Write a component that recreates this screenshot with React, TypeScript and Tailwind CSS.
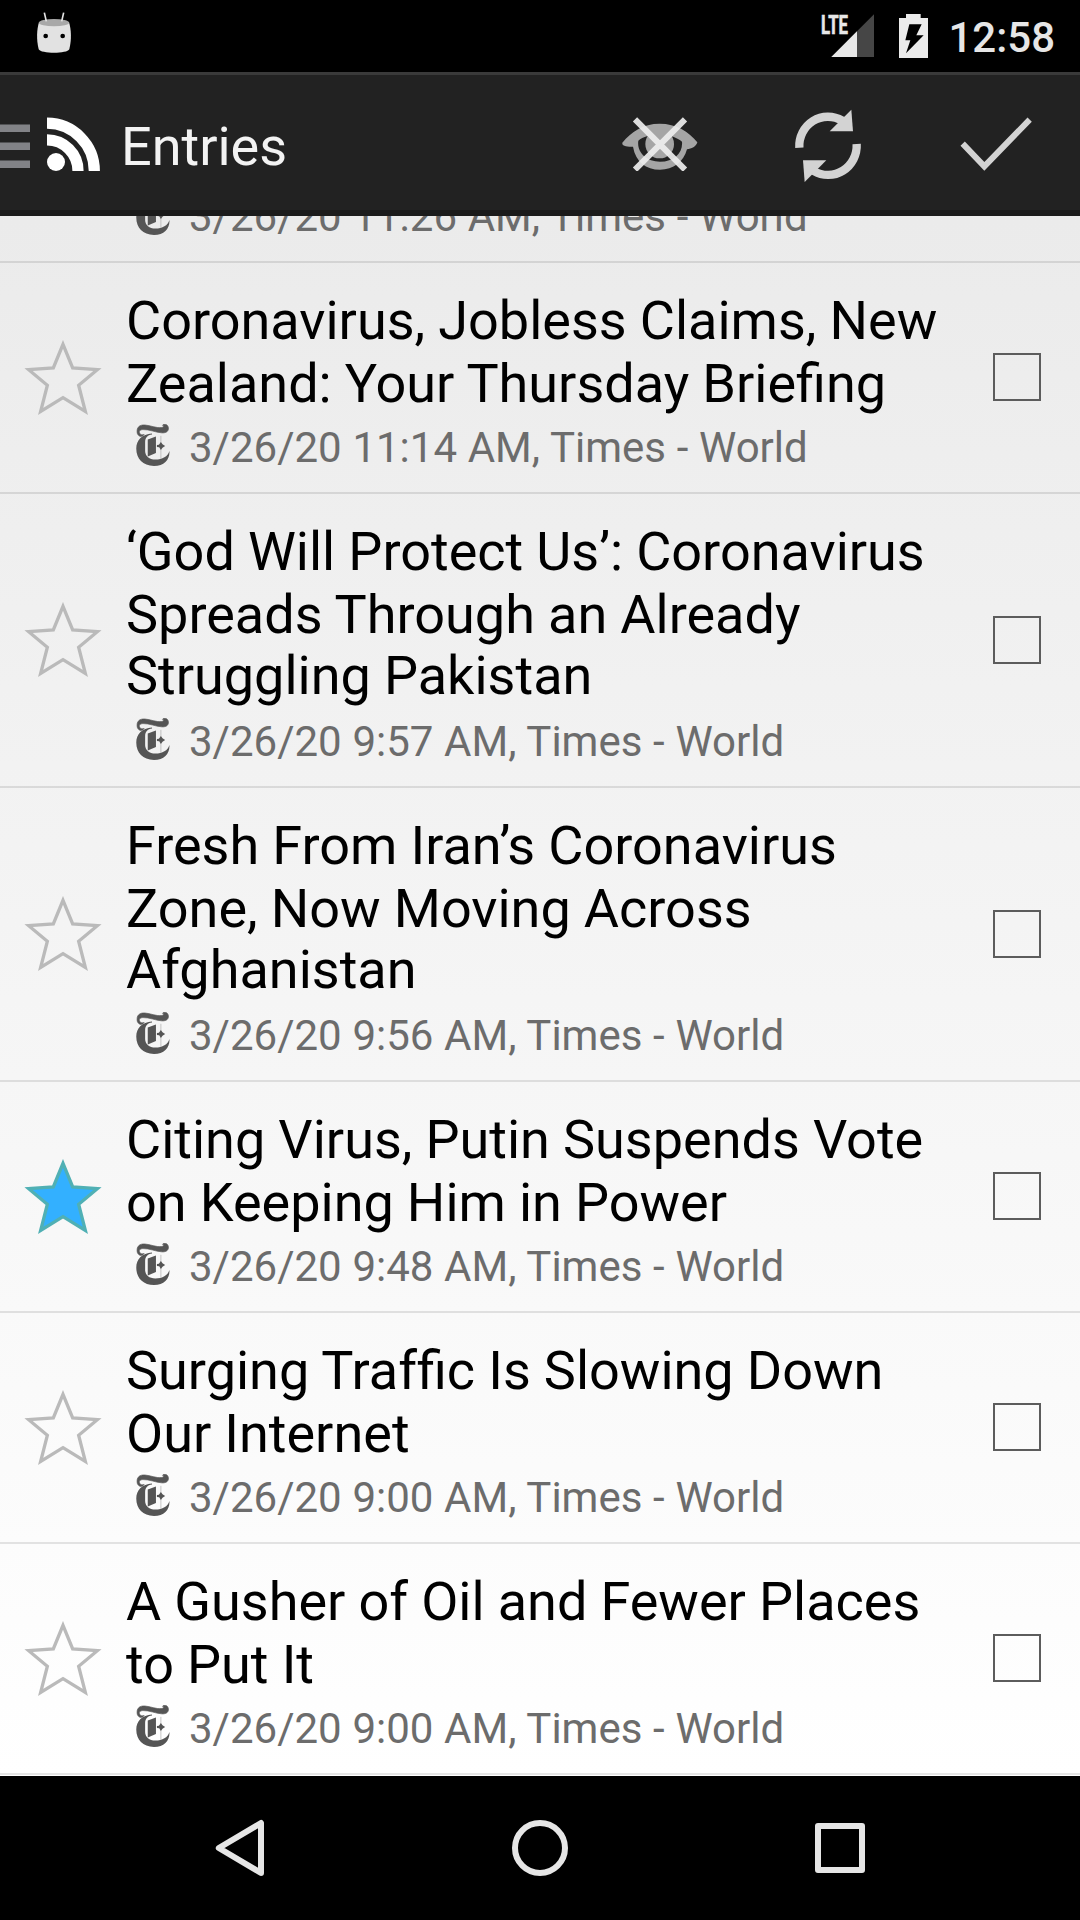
import React from "react";

type Entry = { lines: string[][]; meta: string; starred?: boolean };

const entries: Entry[] = [
  { lines: [["Coronavirus, Jobless Claims, New"], ["Zealand: Your Thursday Briefing"]], meta: "3/26/20 11:14 AM, Times - World" },
  { lines: [["‘God Will Protect Us’: Coronavirus"], ["Spreads Through an Already"], ["Struggling Pakistan"]], meta: "3/26/20 9:57 AM, Times - World" },
  { lines: [["Fresh From Iran’s Coronavirus"], ["Zone, Now Moving Across"], ["Afghanistan"]], meta: "3/26/20 9:56 AM, Times - World" },
  { lines: [["Citing Virus, Putin Suspends Vote"], ["on Keeping Him in Power"]], meta: "3/26/20 9:48 AM, Times - World", starred: true },
  // Split inside "Traffic" so that only the "fi" pair forms a ligature.
  { lines: [["Surging Traf", "fic Is Slowing Down"], ["Our Internet"]], meta: "3/26/20 9:00 AM, Times - World" },
  { lines: [["A Gusher of Oil and Fewer Places"], ["to Put It"]], meta: "3/26/20 9:00 AM, Times - World" },
];

function TimesLogo() {
  return (
    <svg className="mt-px ml-[10px] h-[42px] w-[34px] shrink-0" viewBox="34 26 102 128" fill="#555">
      <path d="M37 54C34 36 44 28 60 29C76 30 96 39 110 37C118 36 119 31 114 30C117 25 128 26 131 34C135 46 127 54 112 53C94 52 72 42 54 43C44 44 41 49 45 55C47 59 52 60 58 58C51 68 40 64 37 54Z" stroke="#555" strokeWidth="2" />
      <path d="M82 58C68 60 61 68 61 82V108C61 124 74 134 92 134C114 134 130 125 135 108C137 133 120 154 88 154C54 154 34 132 34 101C34 75 52 57 82 55Z" />
      <path d="M69 73L94 64V114L69 125Z" />
      <path d="M109 62V132" stroke="#a6a6a6" strokeWidth="2" />
      <path d="M97 90L103 89L109 81L114 88L122 93L114 98L109 105L104 97L97 96Z" />
    </svg>
  );
}

function Star({ on }: { on?: boolean }) {
  return (
    <svg className="-mt-px h-[75px] w-[78px]" viewBox="72 150 234 225">
      <path
        d="M189 163L218 234L292 239L236 286L256 364L189 323L122 364L142 286L86 239L160 234Z"
        fill={on ? "#33b0ff" : "none"}
        stroke={on ? "#50b0b4" : "#bababa"}
        strokeWidth="10"
        strokeMiterlimit="10"
      />
    </svg>
  );
}

function Meta({ text }: { text: string }) {
  return (
    <div className="flex h-[49px] items-start text-[42px] leading-[49px] text-[#6c6c6c]">
      <TimesLogo />
      <span className="ml-[19px] whitespace-pre [word-spacing:0.3px]">{text}</span>
    </div>
  );
}

function Row({ entry }: { entry: Entry }) {
  return (
    <div className="flex items-center border-b-2 border-black/10">
      <div className="flex w-[126px] shrink-0 justify-center">
        <Star on={entry.starred} />
      </div>
      <div className="flex-1 pt-[26px] pb-5">
        <div className="text-[54px] leading-[63px] text-black [word-spacing:-0.3px]">
          {entry.lines.map((parts, i) => (
            <div key={i} className={i === 2 ? "-mt-0.5 pb-0.5 whitespace-pre" : "whitespace-pre"}>
              {parts.length === 1 ? parts[0] : parts.map((p) => <span key={p} className="inline-block">{p}</span>)}
            </div>
          ))}
        </div>
        <div className="mt-2">
          <Meta text={entry.meta} />
        </div>
      </div>
      <div className="-mt-px mr-[39px] size-12 shrink-0 border-2 border-[#5c5c5c]" />
    </div>
  );
}

function StatusBar() {
  return (
    <div className="flex h-[72px] items-start bg-black">
      <svg className="mt-3 ml-9 h-[42px] w-9" viewBox="108 36 108 126">
        <path d="M117 66C110 90 109 118 116 148C122 162 202 162 208 148C215 118 214 90 207 66Z" fill="#e2e2e2" />
        <ellipse cx="162" cy="68" rx="45" ry="11" fill="#a8a8a8" />
        <path d="M133 38L139 64M191 38L185 64" stroke="#e2e2e2" strokeWidth="5" />
        <circle cx="137" cy="108" r="7" />
        <circle cx="188" cy="108" r="7" />
      </svg>
      <div className="flex-1" />
      <svg className="mt-[14px] h-11 w-[54px] overflow-visible" viewBox="120 42 162 132">
        <path d="M154 171H282V43Z" fill="#464646" />
        <path d="M154 171H231V94Z" fill="#e8e8e8" />
        <path d="M120 42H208V105H120Z" />
        <text x="123" y="101" fontFamily="Roboto" fontWeight="700" fontSize="78" textLength="81" lengthAdjust="spacingAndGlyphs" fill="#e8e8e8" stroke="#e8e8e8" strokeWidth="2">LTE</text>
      </svg>
      <svg className="mt-[14px] ml-[25px] h-11 w-[29px]" viewBox="357 42 87 132">
        <path d="M378 42H422V54H444V174H357V54H378Z" fill="#ebebeb" />
        <path d="M388 73H425L409 106H431L378 160L391 121H376Z" />
      </svg>
      <div className="mr-[25px] ml-5 pt-[13px] text-[42px] leading-[49px] font-medium text-[#e6e6e6]">12:58</div>
    </div>
  );
}

function ActionBar() {
  return (
    <div className="flex h-[144px] items-center border-t-[3px] border-b-[6px] border-t-[#3a3a3a] border-b-[#1b1b1b] bg-[#222] pt-[3px]">
      <svg className="mt-1 h-[54px] w-[30px]" viewBox="0 0 30 54">
        <path d="M0 9.3H30M0 27.3H30M0 45.3H30" stroke="#828387" strokeWidth="7.6" />
      </svg>
      <svg className="ml-[17px] h-[54px] w-[54px]" viewBox="0 0 54 54" fill="none" stroke="#fff">
        <circle cx="9" cy="45" r="9" fill="#fff" stroke="none" />
        <path d="M0 6.2A47.6 47.6 0 0 1 47.3 54M0 22.9A31 31 0 0 1 31 54" strokeWidth="11.2" />
      </svg>
      <div className="ml-[20px] pt-[5px] text-[54px] leading-[63px] text-[#f3f3f3]">Entries</div>
      <div className="flex-1" />
      <svg className="mb-px h-[54px] w-[76px]" viewBox="67 79 228 162">
        <path fillRule="evenodd" fill="#a5a5a5" d="M68 156C95 123 130 99 180 99C230 99 267 123 293 155C290 167 275 175 262 176C252 214 221 237 181 237C139 237 108 214 100 168C85 168 66 168 68 156ZM116 150C111 184 139 213 181 213C224 213 250 187 247 153C235 142 206 131 181 131C156 131 128 139 116 150Z" />
        <circle cx="180" cy="160" r="43" fill="#a5a5a5" />
        <path d="M106 86L256 237M256 86L106 237" stroke="#eee" strokeOpacity=".92" strokeWidth="18" />
      </svg>
      <svg className="mt-[3px] ml-[96px] h-[74px] w-[68px]" viewBox="43 325 204 222">
        <g id="half-turn" fill="#d3d3d3">
          <path d="M59 441A86 88 0 0 1 188 360" fill="none" stroke="#d3d3d3" strokeWidth="25" />
          <path d="M215 327L220 392H150Z" />
        </g>
        <use href="#half-turn" transform="rotate(180 145 435.5)" />
      </svg>
      <svg className="mr-[48px] ml-[98px] h-[54px] w-[72px]" viewBox="540 351 216 162">
        <path d="M548 431L613 499L749 359" fill="none" stroke="#d3d3d3" strokeWidth="18" />
      </svg>
    </div>
  );
}

function NavBar() {
  return (
    <div className="flex h-[144px] items-center justify-between bg-black px-[210px]">
      <svg className="size-[60px]" viewBox="0 0 60 60" fill="none" stroke="#e6e6e6" strokeWidth="6" strokeLinejoin="round">
        <path d="M51 5V55L8.8 30Z" />
      </svg>
      <svg className="size-[60px]" viewBox="0 0 60 60" fill="none" stroke="#e6e6e6" strokeWidth="6">
        <circle cx="30" cy="30" r="25" />
      </svg>
      <svg className="size-[60px]" viewBox="0 0 60 60" fill="none" stroke="#e6e6e6" strokeWidth="6" strokeLinejoin="round">
        <rect x="8" y="8" width="44" height="44" />
      </svg>
    </div>
  );
}

export default function App() {
  return (
    <div className="flex h-[1920px] w-[1080px] flex-col overflow-hidden font-['Roboto',sans-serif]">
      <StatusBar />
      <ActionBar />
      <div className="h-[1560px] overflow-hidden bg-linear-to-b from-[#ebebeb] to-white">
        <div className="flex h-[47px] flex-col justify-end overflow-hidden border-b-2 border-black/10 pb-5 pl-[126px]">
          <Meta text="3/26/20 11:26 AM, Times - World" />
        </div>
        {entries.map((e) => (
          <Row key={e.lines[0][0]} entry={e} />
        ))}
      </div>
      <NavBar />
    </div>
  );
}
